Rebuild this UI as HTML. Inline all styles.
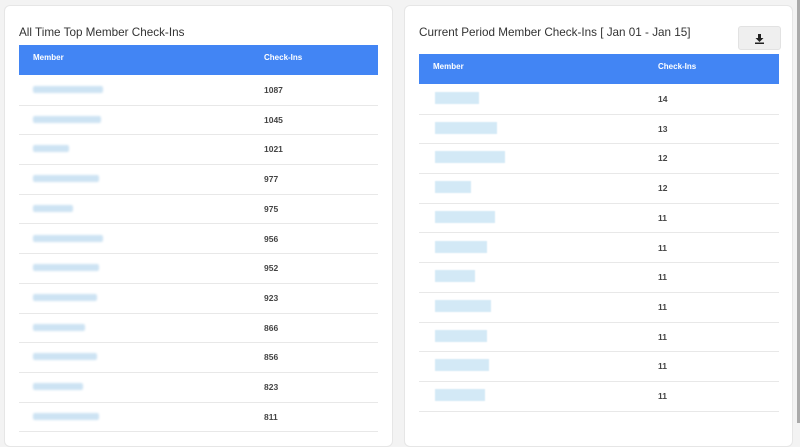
<!DOCTYPE html><html><head><style>
body{margin:0;width:800px;height:423px;overflow:hidden;background:#f3f3f3;font-family:"Liberation Sans",sans-serif;position:relative}
.card{position:absolute;top:5px;background:#fff;border:1px solid #e6e6e6;border-radius:6px;height:440px}
h2{position:absolute;margin:0;font-weight:normal;font-size:11.7px;color:#333}
.hdr{position:absolute;height:30px;background:#4285f4;color:#fff;font-size:8px;font-weight:bold}
.hdr span{position:absolute;top:8px}
.row{position:absolute;height:29.7px;border-bottom:1px solid #e8e8e8;font-size:8.5px;font-weight:bold;color:#444}
.row span{position:absolute;top:10px}
.b{position:absolute;top:11px;height:7px;background:#cde3f3;border-radius:2px;filter:blur(1px)}
.bb{position:absolute;top:8px;height:12px;background:#d3e9f6;filter:blur(.5px)}
</style></head><body>
<div class="card" style="left:4px;width:387px"></div>
<div class="card" style="left:404px;width:387px"></div>
<div style="position:absolute;left:797px;top:0;width:3px;height:423px;background:#aaa"></div>
<h2 style="left:19px;top:26px">All Time Top Member Check-Ins</h2>
<h2 style="left:419px;top:26px">Current Period Member Check-Ins [ Jan 01 - Jan 15]</h2>
<div style="position:absolute;left:738px;top:26px;width:41px;height:22px;background:#efefef;border-radius:3px;border:1px solid #e2e2e2">
<svg width="41" height="22" viewBox="0 0 41 22"><path d="M19 7h3v4h2.5l-4 4-4-4H19z" fill="#222"/><rect x="16" y="15.5" width="9" height="1.5" fill="#222"/></svg></div>
<div class="hdr" style="left:19px;top:45px;width:359px"><span style="left:14px">Member</span><span style="left:245px">Check-Ins</span></div>
<div class="hdr" style="left:419px;top:54px;width:360px"><span style="left:14px">Member</span><span style="left:239px">Check-Ins</span></div>
<div id="L"></div><div id="R"></div>
<script>
var l=[1087,1045,1021,977,975,956,952,923,866,856,823,811],lw=[70,68,36,66,40,70,66,64,52,64,50,66],h='';
l.forEach(function(v,i){var t=75+i*29.7;h+='<div class="row" style="left:19px;top:'+t+'px;width:359px"><div class="b" style="left:14px;width:'+lw[i]+'px"></div><span style="left:245px">'+v+'</span></div>';});
var r=[14,13,12,12,11,11,11,11,11,11,11],rw=[44,62,70,36,60,52,40,56,52,54,50];
r.forEach(function(v,i){var t=84+i*29.7;h+='<div class="row" style="left:419px;top:'+t+'px;width:360px"><div class="bb" style="left:16px;width:'+rw[i]+'px"></div><span style="left:239px">'+v+'</span></div>';});
document.getElementById('L').innerHTML=h;
</script>
</body></html>
